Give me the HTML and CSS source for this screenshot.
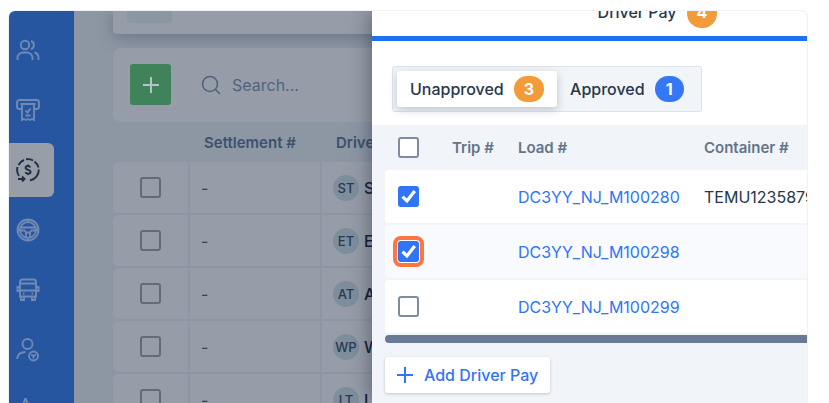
FILE: index.html
```html
<!DOCTYPE html>
<html lang="en">
<head>
    <meta charset="UTF-8">
    <meta name="viewport" content="width=device-width, initial-scale=1.0">
    <title>Driver Settlements</title>
    <link rel="stylesheet" href="styles.css">
</head>
<body>
    <div class="frame">
        <nav class="sidebar">
            <a class="nav-item" href="#" aria-label="Customers">
                <svg viewBox="0 0 24 24"><circle cx="9" cy="7" r="4.200"/><path d="M1.500 22v-2a5.500 5.500 0 0 1 5.500-5.500h4a5.500 5.500 0 0 1 5.500 5.500v2M15 3a4.200 4.200 0 0 1 0 8M18.500 14.500a5.500 5.500 0 0 1 4 5V22"/></svg>
            </a>
            <a class="nav-item" href="#" aria-label="Billing">
                <svg viewBox="0 0 24 24"><path d="M5 11H3.500A2.500 2.500 0 0 1 1 8.500v-4A2.500 2.500 0 0 1 3.500 2h17A2.500 2.500 0 0 1 23 4.500v4a2.500 2.500 0 0 1-2.500 2.500H19M4.500 6h15M6 6v16l2-1 2 1 2-1 2 1 2-1 2 1V6M9.500 17.500h5"/><path d="M9.500 12.500l2 2 3-4"/></svg>
            </a>
            <a class="nav-item active" href="#" aria-label="Driver pay">
                <svg viewBox="0 0 24 24"><path d="M3 18A11 11 0 0 1 1.500 9M2.500 7A11 11 0 0 1 8 2M10 1.300A11 11 0 0 1 17 2.500M18.500 3.500A11 11 0 0 1 22.500 9.500M22.800 11.500A11 11 0 0 1 14 22.500M2 21h6M6 18.500L8.500 21 6 23.500"/><path d="M14.300 9.300c-.4-.9-1.200-1.300-2.300-1.300-1.400 0-2.400.7-2.400 1.800 0 2.700 5 1.300 5 4 0 1.200-1.100 1.900-2.600 1.900-1.300 0-2.200-.5-2.600-1.500M12 6.500v1.500M12 15.500v1.500"/></svg>
            </a>
            <a class="nav-item" href="#" aria-label="Drivers">
                <svg viewBox="0 0 24 24"><circle cx="12" cy="12" r="10.500"/><circle cx="12" cy="12" r="8"/><path d="M4.500 9.500h15M4.500 12.500h4l1.500 2v5M19.500 12.500h-4l-1.500 2v5M10 14.500h4M12 1v3M1 12h3M20 12h3M12 20v3"/></svg>
            </a>
            <a class="nav-item" href="#" aria-label="Trucks">
                <svg viewBox="0 0 24 24"><path d="M4 18.500V4a2.500 2.500 0 0 1 2.500-2.500h11A2.500 2.500 0 0 1 20 4v14.500zM4 5.500h16M4 12.500h16M4 9H1.500v4H4M20 9h2.500v4H20M5 18.500V22h3v-3.500M16 18.500V22h3v-3.500M7 15.500h1.500M15.500 15.500H17"/></svg>
            </a>
            <a class="nav-item" href="#" aria-label="User settings">
                <svg viewBox="0 0 24 24"><circle cx="11.500" cy="6" r="5"/><path d="M1 21c.5-4.500 3.500-7 8.500-7"/><circle cx="17.500" cy="18" r="4.500"/><path d="M15 16.500l2.500 1.500 2.500-1.500M17.500 18v2.500"/></svg>
            </a>
            <a class="nav-item" href="#" aria-label="Favorites">
                <svg viewBox="0 0 24 24"><path d="M9.500 0l2.500 7 9 1-6.500 5 2 8-7-4.500L3 21l2-8-5-5 7-1z"/></svg>
            </a>
        </nav>

        <main class="page">
            <div class="page-header">
                <div class="header-chip"></div>
            </div>
            <div class="toolbar">
                <button class="btn-new" type="button" aria-label="New settlement">
                    <svg viewBox="0 0 16 16"><path d="M8 0v16M0 8h16"/></svg>
                </button>
                <label class="search">
                    <svg viewBox="0 0 20 20"><circle cx="9" cy="9" r="7.500"/><path d="M14.500 14.500L19 19"/></svg>
                    <input type="text" placeholder="Search..." aria-label="Search">
                </label>
            </div>
            <table class="settlements">
                <thead>
                    <tr>
                        <th class="col-check"></th>
                        <th class="col-number">Settlement #</th>
                        <th class="col-driver">Driver</th>
                    </tr>
                </thead>
                <tbody>
                    <tr>
                        <td><input type="checkbox" aria-label="Select ST"></td>
                        <td>-</td>
                        <td><div class="driver"><span class="avatar">ST</span>S</div></td>
                    </tr>
                    <tr>
                        <td><input type="checkbox" aria-label="Select ET"></td>
                        <td>-</td>
                        <td><div class="driver"><span class="avatar">ET</span>E</div></td>
                    </tr>
                    <tr>
                        <td><input type="checkbox" aria-label="Select AT"></td>
                        <td>-</td>
                        <td><div class="driver"><span class="avatar">AT</span>A</div></td>
                    </tr>
                    <tr>
                        <td><input type="checkbox" aria-label="Select WP"></td>
                        <td>-</td>
                        <td><div class="driver"><span class="avatar">WP</span>W</div></td>
                    </tr>
                    <tr>
                        <td><input type="checkbox" aria-label="Select LT"></td>
                        <td>-</td>
                        <td><div class="driver"><span class="avatar">LT</span>L</div></td>
                    </tr>
                </tbody>
            </table>
        </main>

        <section class="drawer">
            <div class="drawer-tab">
                <span>Driver Pay</span>
                <span class="badge orange">4</span>
            </div>
            <div class="switch-bar">
                <div class="switch">
                    <button class="active" type="button">Unapproved <span class="badge orange">3</span></button>
                    <button type="button">Approved <span class="badge blue">1</span></button>
                </div>
            </div>
            <div class="pay">
                <table class="loads">
                    <thead>
                        <tr>
                            <th class="col-check"><input type="checkbox" aria-label="Select all"></th>
                            <th class="col-trip">Trip #</th>
                            <th class="col-load">Load #</th>
                            <th>Container #</th>
                        </tr>
                    </thead>
                    <tbody>
                        <tr>
                            <td><input type="checkbox" checked aria-label="Select DC3YY_NJ_M100280"></td>
                            <td></td>
                            <td><a href="#">DC3YY_NJ_M100280</a></td>
                            <td>TEMU1235879</td>
                        </tr>
                        <tr class="hovered">
                            <td><input class="highlight" type="checkbox" checked aria-label="Select DC3YY_NJ_M100298"></td>
                            <td></td>
                            <td><a href="#">DC3YY_NJ_M100298</a></td>
                            <td></td>
                        </tr>
                        <tr>
                            <td><input type="checkbox" aria-label="Select DC3YY_NJ_M100299"></td>
                            <td></td>
                            <td><a href="#">DC3YY_NJ_M100299</a></td>
                            <td></td>
                        </tr>
                    </tbody>
                </table>
                <div class="scrollbar"></div>
                <button class="btn-add" type="button">
                    <svg viewBox="0 0 16 16"><path d="M8 0v16M0 8h16"/></svg>
                    Add Driver Pay
                </button>
            </div>
        </section>
    </div>
</body>
</html>
```

FILE: styles.css
```css
* {
    box-sizing: border-box;
}
body {
    margin: 0;
    padding: 11px 22px 0 9px;
    height: 100vh;
    overflow: hidden;
    background: white;
    font-family: Inter, sans-serif;
    font-size: 16px;
}
button, input {
    font-family: inherit;
    font-size: inherit;
}
svg {
    fill: none;
    stroke: currentColor;
    stroke-width: 2;
    flex: none;
}
.frame {
    display: flex;
    height: 100%;
    overflow: hidden;
    border-radius: 6px 6px 0 0;
    box-shadow: 0 0 0 1px #f0f2f5;
}

/* Sidebar */
.sidebar {
    flex: 0 0 65px;
    padding-top: 12px;
    display: flex;
    flex-direction: column;
    gap: 6px;
    background: #2656a0;
    border-right: 1px solid #1855a8;
    color: #7189b3;
}
.nav-item {
    flex: none;
    width: 45px;
    height: 54px;
    padding-left: 7px;
    display: flex;
    align-items: center;
    color: inherit;
}
.nav-item svg {
    width: 24px;
    height: 24px;
    stroke-width: 1.9;
}
.nav-item.active {
    background: #979ea8;
    color: #1f2f45;
    border-radius: 0 6px 6px 0;
}

/* Page behind the drawer */
.page {
    flex: 0 0 298px;
    padding-left: 39px;
    overflow: hidden;
    background: #8d97a4;
    color: #10203a;
}
.page-header {
    width: 400px;
    height: 23px;
    padding-left: 14px;
    background: #969da8;
    border-radius: 0 0 4px 4px;
    box-shadow: 0 3px 16px rgba(50, 65, 85, 0.4);
}
.header-chip {
    width: 45px;
    height: 12px;
    background: #8c97a4;
    border-radius: 0 0 4px 4px;
}
.toolbar {
    width: 400px;
    margin-top: 14px;
    padding: 16px 17px 17px;
    display: flex;
    gap: 30px;
    background: #969da8;
    border-radius: 8px;
}
.btn-new {
    flex: none;
    width: 41px;
    height: 41px;
    padding: 0;
    display: flex;
    align-items: center;
    justify-content: center;
    background: #40835a;
    color: #b4c4c0;
    border: none;
    border-radius: 3px;
    cursor: pointer;
}
.btn-new svg, .btn-add svg {
    width: 16px;
    height: 16px;
}
.search {
    display: flex;
    align-items: center;
    gap: 11px;
    color: #4f637e;
}
.search svg {
    width: 20px;
    height: 20px;
    stroke-width: 1.6;
}
.search input {
    width: 130px;
    padding: 0;
    border: none;
    outline: none;
    background: none;
    color: inherit;
}
.search input::placeholder {
    color: inherit;
}
table {
    table-layout: fixed;
    border-collapse: separate;
    border-spacing: 0 2px;
}
th, td {
    padding: 0;
    text-align: left;
    white-space: nowrap;
}
th {
    font-size: 15px;
    font-weight: 600;
}
.settlements {
    width: 400px;
}
.settlements th {
    height: 36px;
    padding-left: 14px;
    color: #3b526f;
}
.settlements .col-check {
    width: 77px;
}
.settlements .col-number {
    width: 132px;
}
.settlements td {
    height: 51px;
    padding-left: 11px;
    background: #969da8;
    border-right: 2px solid #8d96a4;
}
.settlements td:first-child {
    padding-left: 27px;
    border-radius: 6px 0 0 6px;
}
.settlements td:nth-child(2) {
    color: #33445c;
}
.driver {
    display: flex;
    align-items: center;
    gap: 5px;
    font-weight: 500;
}
.avatar {
    width: 26px;
    height: 26px;
    display: flex;
    align-items: center;
    justify-content: center;
    background: #7f8e9d;
    border-radius: 50%;
    color: #273a54;
    font-size: 13px;
}
input[type="checkbox"] {
    appearance: none;
    display: block;
    width: 21px;
    height: 21px;
    margin: 0;
    background: white;
    border: 2px solid #7d8ca3;
    border-radius: 3px;
}
.settlements input[type="checkbox"] {
    background: none;
    border-color: #626c78;
}
input[type="checkbox"]:checked {
    background: #2f75f6;
    border-color: #2f75f6;
}
input[type="checkbox"]:checked::before {
    content: "";
    display: block;
    height: 17px;
    background: white;
    clip-path: polygon(8% 58%, 22% 44%, 40% 62%, 79% 12%, 94% 24%, 42% 90%);
}
input[type="checkbox"].highlight {
    box-shadow: 0 0 0 1px white, 0 0 0 5px #ff7542;
}

/* Drawer */
.drawer {
    position: relative;
    flex: 1;
    min-width: 0;
    display: flex;
    flex-direction: column;
    background: white;
    color: #27364b;
    box-shadow: 0 0 20px rgba(20, 30, 45, 0.5);
}
.drawer-tab {
    flex: none;
    height: 30px;
    padding: 0 0 8px 136px;
    display: flex;
    align-items: flex-end;
    justify-content: center;
    gap: 10px;
    border-bottom: 5px solid #1f70f5;
    font-weight: 500;
    line-height: 26px;
}
.drawer-tab span {
    padding-bottom: 3px;
}
.badge {
    min-width: 29px;
    padding: 0 10px;
    border-radius: 15px;
    color: white;
    font-weight: 700;
    line-height: 26px;
    text-align: center;
}
.orange {
    background: #f29b38;
}
.blue {
    background: #3478f6;
}
.switch-bar {
    padding: 25px 20px 13px;
    display: flex;
}
.switch {
    padding: 4px;
    display: flex;
    background: #f1f4f9;
    border: 1px solid #dde4ed;
    border-radius: 3px;
}
.switch button {
    height: 36px;
    padding: 0 13px;
    display: flex;
    align-items: center;
    gap: 10px;
    background: none;
    border: none;
    border-radius: 3px;
    color: #27364b;
    font-weight: 500;
    cursor: pointer;
}
.switch .active {
    background: white;
    box-shadow: 0 3px 8px rgba(50, 65, 85, 0.25);
}
.pay {
    flex: 1;
    padding-left: 13px;
    background: #f1f4f9;
    overflow: hidden;
}
.loads {
    width: 100%;
}
.loads th {
    height: 41px;
    color: #64748b;
}
.loads .col-check {
    width: 67px;
}
.loads .col-trip {
    width: 66px;
}
.loads .col-load {
    width: 186px;
}
.loads th:first-child, .loads td:first-child {
    padding-left: 13px;
}
.loads td {
    height: 53px;
    background: white;
}
.loads td:first-child {
    border-radius: 4px 0 0 4px;
}
.loads .hovered td {
    background: #f9fafe;
}
.loads a {
    color: #2f75f6;
    text-decoration: none;
}
.scrollbar {
    height: 8px;
    background: #677b96;
    border-radius: 4px 0 0 4px;
}
.btn-add {
    height: 36px;
    margin-top: 14px;
    padding: 0 12px;
    display: flex;
    align-items: center;
    gap: 11px;
    background: white;
    border: none;
    border-radius: 3px;
    box-shadow: 0 1px 3px rgba(50, 65, 85, 0.25);
    color: #2f75f6;
    font-weight: 500;
    cursor: pointer;
}
```
